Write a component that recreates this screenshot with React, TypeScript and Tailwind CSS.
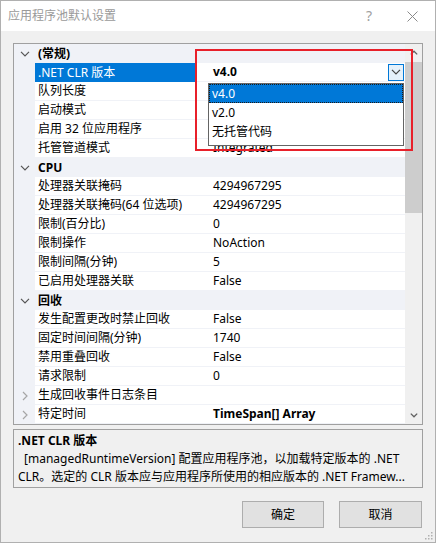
import React from "react";

type Row =
  | { kind: "cat"; label: string }
  | {
      kind: "prop";
      label: string;
      value?: string;
      bold?: boolean;
      expander?: boolean;
      selected?: boolean;
    };

// values of 队列长度 / 启动模式 / 启用 32 位 are hidden by the open list in the shot
const rows: Row[] = [
  { kind: "cat", label: "(常规)" },
  { kind: "prop", label: ".NET CLR 版本", value: "v4.0", bold: true, selected: true },
  { kind: "prop", label: "队列长度", value: "" },
  { kind: "prop", label: "启动模式", value: "" },
  { kind: "prop", label: "启用 32 位应用程序", value: "" },
  { kind: "prop", label: "托管管道模式", value: "Integrated" },
  { kind: "cat", label: "CPU" },
  { kind: "prop", label: "处理器关联掩码", value: "4294967295" },
  { kind: "prop", label: "处理器关联掩码(64 位选项)", value: "4294967295" },
  { kind: "prop", label: "限制(百分比)", value: "0" },
  { kind: "prop", label: "限制操作", value: "NoAction" },
  { kind: "prop", label: "限制间隔(分钟)", value: "5" },
  { kind: "prop", label: "已启用处理器关联", value: "False" },
  { kind: "cat", label: "回收" },
  { kind: "prop", label: "发生配置更改时禁止回收", value: "False" },
  { kind: "prop", label: "固定时间间隔(分钟)", value: "1740" },
  { kind: "prop", label: "禁用重叠回收", value: "False" },
  { kind: "prop", label: "请求限制", value: "0" },
  { kind: "prop", label: "生成回收事件日志条目", value: "", expander: true },
  { kind: "prop", label: "特定时间", value: "TimeSpan[] Array", bold: true, expander: true },
];

function ChevronDown({ color = "#555" }: { color?: string }) {
  return (
    <svg width="10" height="6" viewBox="0 0 10 6">
      <path d="M1 0.8 L5 4.8 L9 0.8" fill="none" stroke={color} strokeWidth="1.2" />
    </svg>
  );
}

function ChevronRight() {
  return (
    <svg width="6" height="10" viewBox="0 0 6 10">
      <path d="M1 1 L5 5 L1 9" fill="none" stroke="#a6a6a6" strokeWidth="1.2" />
    </svg>
  );
}

function GridRow({ row }: { row: Row }) {
  if (row.kind === "cat") {
    return (
      <div className="flex h-[19px] items-center bg-[#f0f2f7]">
        <div className="flex w-[21px] justify-center pl-[1px]">
          <ChevronDown />
        </div>
        <div className="pl-[3px] font-bold text-black">{row.label}</div>
      </div>
    );
  }
  return (
    <div className="flex h-[19px]">
      <div className="flex w-[21px] items-center justify-center bg-[#f0f2f7]">
        {row.expander && <ChevronRight />}
      </div>
      <div
        className={
          row.selected
            ? "flex w-[160px] items-center bg-[#0078d7] pl-[3px] text-white"
            : "flex w-[160px] items-center border-b border-[#f0f2f7] pl-[3px] text-black"
        }
      >
        <span className="whitespace-nowrap">{row.label}</span>
      </div>
      <div className="flex flex-1 items-center border-b border-[#f0f2f7] pl-[18px] text-black">
        <span className={row.bold ? "font-bold whitespace-nowrap" : "whitespace-nowrap"}>
          {row.value}
        </span>
        {row.selected && (
          <div className="ml-auto mr-[1px] flex h-[17px] w-[16px] items-center justify-center border border-[#0078d7] bg-[#e5f1fb]">
            <ChevronDown color="#444" />
          </div>
        )}
      </div>
    </div>
  );
}

export default function App() {
  return (
    <div className="relative flex h-[543px] w-[436px] flex-col border border-[#b0b0b0] bg-[#f0f0f0] font-['Noto_Sans','Noto_Sans_CJK_SC',sans-serif] text-[12px] leading-[18px]">
      {/* title bar */}
      <div className="flex h-[30px] items-center bg-white pl-[7px]">
        <span className="text-[#9a9a9a]">应用程序池默认设置</span>
        <span className="ml-auto mr-[35px] text-[14px] text-[#a0a0a0]">?</span>
        <svg width="11" height="11" viewBox="0 0 11 11" className="mr-[17px]">
          <path d="M0.5 0.5 L10.5 10.5 M10.5 0.5 L0.5 10.5" stroke="#8a8a8a" strokeWidth="1" />
        </svg>
      </div>

      <div className="flex flex-1 flex-col px-[12px] pt-[12px]">
        {/* property grid */}
        <div className="relative flex h-[382px] border border-[#a0a0a0] bg-white">
          <div className="flex-1">
            {rows.map((r, i) => (
              <GridRow key={i} row={r} />
            ))}
          </div>
          {/* scrollbar */}
          <div className="flex w-[17px] flex-col bg-[#f0f0f0]">
            <div className="flex h-[17px] items-center justify-center">
              <svg width="8" height="5" viewBox="0 0 8 5">
                <path d="M0.8 4.4 L4 1.2 L7.2 4.4" fill="none" stroke="#606060" strokeWidth="1.3" />
              </svg>
            </div>
            <div className="mt-[1px] h-[151px] bg-[#cdcdcd]" />
            <div className="flex-1" />
            <div className="flex h-[17px] items-center justify-center">
              <svg width="8" height="5" viewBox="0 0 8 5">
                <path d="M0.8 0.6 L4 3.8 L7.2 0.6" fill="none" stroke="#606060" strokeWidth="1.3" />
              </svg>
            </div>
          </div>

          {/* open dropdown list */}
          <div className="absolute left-[194px] top-[39px] h-[63px] w-[196px] border border-[#646464] bg-white">
            <div className="flex h-[19px] items-center border border-dotted border-[#1a1a1a] bg-[#0078d7] pl-[2px] text-white">
              v4.0
            </div>
            <div className="flex h-[19px] items-center pl-[3px] text-black">v2.0</div>
            <div className="flex h-[19px] items-center pl-[3px] text-black">无托管代码</div>
          </div>

          {/* red annotation */}
          <div className="absolute left-[181px] top-[5px] h-[102px] w-[218px] border-2 border-[#e8202a]" />
        </div>

        {/* description */}
        <div className="mt-[4px] h-[59px] border border-[#a0a0a0] bg-[#f0f0f0] pl-[4px] pt-[2px] text-black">
          <div className="font-bold">.NET CLR 版本</div>
          <div className="whitespace-nowrap pl-[6px]">[managedRuntimeVersion] 配置应用程序池，以加载特定版本的 .NET</div>
          <div className="whitespace-nowrap">CLR。选定的 CLR 版本应与应用程序所使用的相应版本的 .NET Framew...</div>
        </div>

        {/* buttons */}
        <div className="mt-[13px] flex justify-end gap-[15px] pr-[1px]">
          <button className="h-[27px] w-[82px] border border-[#adadad] bg-[#e1e1e1] text-black">
            确定
          </button>
          <button className="h-[27px] w-[83px] border border-[#adadad] bg-[#e1e1e1] text-black">
            取消
          </button>
        </div>
      </div>

      {/* resize grip */}
      <svg width="8" height="8" viewBox="0 0 8 8" className="absolute bottom-[2px] right-[2px]">
        <rect x="6" y="0" width="1.5" height="1.5" fill="#b0b0b0" />
        <rect x="3" y="3" width="1.5" height="1.5" fill="#b0b0b0" />
        <rect x="6" y="3" width="1.5" height="1.5" fill="#b0b0b0" />
        <rect x="0" y="6" width="1.5" height="1.5" fill="#b0b0b0" />
        <rect x="3" y="6" width="1.5" height="1.5" fill="#b0b0b0" />
        <rect x="6" y="6" width="1.5" height="1.5" fill="#b0b0b0" />
      </svg>
    </div>
  );
}
